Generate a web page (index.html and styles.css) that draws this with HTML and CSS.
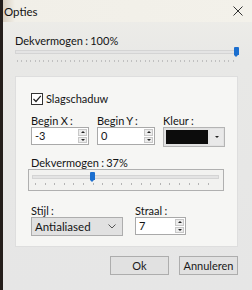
FILE: index.html
```html
<!DOCTYPE html>
<html lang="nl">
<head>
    <meta charset="UTF-8">
    <meta name="viewport" content="width=device-width, initial-scale=1.0">
    <title>Opties</title>
    <link rel="stylesheet" href="styles.css">
</head>
<body>

    <div class="window">
        <!-- Titelbalk -->
        <div class="titlebar">
            <span class="title">Opties</span>
            <svg class="close" width="10" height="10" viewBox="0 0 10 10">
                <path d="M0.5 0.5 L9.5 9.5 M9.5 0.5 L0.5 9.5" stroke="#333" stroke-width="1" fill="none"/>
            </svg>
        </div>

        <div class="content">
            <!-- Dekvermogen venster -->
            <div class="label">Dekvermogen : 100%</div>
            <div class="slider slider-top">
                <div class="track"></div>
                <div class="thumb" style="left: 219px"></div>
                <div class="ticks"></div>
            </div>

            <!-- Slagschaduw -->
            <div class="panel">
                <label class="check">
                    <span class="box">
                        <svg width="10" height="10" viewBox="0 0 10 10">
                            <path d="M1.5 5 L4 7.5 L8.8 1.8" stroke="#222" stroke-width="1.2" fill="none"/>
                        </svg>
                    </span>
                    Slagschaduw
                </label>

                <div class="row">
                    <div class="field">
                        <div class="label">Begin X :</div>
                        <div class="spin w58">
                            <span class="value">-3</span>
                            <span class="arrows"><i class="up"></i><i class="down"></i></span>
                        </div>
                    </div>
                    <div class="field">
                        <div class="label">Begin Y :</div>
                        <div class="spin w58">
                            <span class="value">0</span>
                            <span class="arrows"><i class="up"></i><i class="down"></i></span>
                        </div>
                    </div>
                    <div class="field">
                        <div class="label">Kleur :</div>
                        <div class="color-combo">
                            <span class="swatch"></span>
                            <span class="drop"><i class="down"></i></span>
                        </div>
                    </div>
                </div>

                <div class="label shadow-label">Dekvermogen : 37%</div>
                <div class="slider-box">
                    <div class="slider slider-inner">
                        <div class="track"></div>
                        <div class="thumb" style="left: 58px"></div>
                        <div class="ticks"></div>
                    </div>
                </div>

                <div class="row row-bottom">
                    <div class="field">
                        <div class="label">Stijl :</div>
                        <div class="select">
                            <span>Antialiased</span>
                            <svg width="8" height="5" viewBox="0 0 8 5">
                                <path d="M0.5 0.5 L4 4 L7.5 0.5" stroke="#555" stroke-width="1" fill="none"/>
                            </svg>
                        </div>
                    </div>
                    <div class="field">
                        <div class="label">Straal :</div>
                        <div class="spin w51">
                            <span class="value">7</span>
                            <span class="arrows"><i class="up"></i><i class="down"></i></span>
                        </div>
                    </div>
                </div>
            </div>

            <!-- Knoppen -->
            <div class="buttons">
                <button class="btn">Ok</button>
                <button class="btn">Annuleren</button>
            </div>
        </div>
    </div>

</body>
</html>
```

FILE: styles.css
```css
body {
    margin: 0;
    padding: 0;
    background-color: #241e1b;
    font-family: Lato, "Noto Sans", sans-serif;
    font-size: 11px;
    word-spacing: -0.5px;
    color: #141414;
    overflow: hidden;
}
.window {
    margin-left: 3px;
    height: 290px;
    background-color: #e7e7e6;
    background-image: linear-gradient(180deg, #efeee9 0, #e8e8e6 60px, #e6e6e6 100%);
}
.titlebar {
    height: 22px;
    display: flex;
    align-items: center;
    justify-content: space-between;
    padding: 0 9px 0 1px;
    background: linear-gradient(90deg, #d9cfc0 0, #f1efe8 12px, #f3f1ea 100%);
}
.title {
    font-size: 11.5px;
    color: #111;
}
.content {
    padding: 12px 14px 0 12px;
}
.label {
    height: 14px;
    line-height: 14px;
}
.slider {
    position: relative;
}
.slider-top {
    height: 22px;
}
.slider .track {
    position: absolute;
    left: 0;
    right: 0;
    top: 2px;
    height: 2px;
    background: #e4e4e4;
    border: 1px solid #d4d4d4;
}
.slider .thumb {
    position: absolute;
    top: -1px;
    width: 5px;
    height: 8px;
    background: #1c6fcf;
    border-radius: 1px 1px 0 0;
}
.slider .thumb::after {
    content: "";
    position: absolute;
    left: 0;
    top: 8px;
    border-left: 2.5px solid transparent;
    border-right: 2.5px solid transparent;
    border-top: 2px solid #1c6fcf;
}
.slider .ticks {
    position: absolute;
    left: 2px;
    right: 2px;
    top: 12px;
    height: 2px;
    background: repeating-linear-gradient(90deg, #c0c0c0 0, #c0c0c0 1px, transparent 1px, transparent 4.4px);
}
.panel {
    margin-top: 6px;
    width: 206px;
    height: 153px;
    padding: 16px 0 0 15px;
    background: #f6f6f4;
    border: 1px solid #dedede;
}
.check {
    display: flex;
    align-items: center;
    gap: 3px;
    height: 12px;
    line-height: 12px;
    font-size: 11px;
}
.check .box {
    width: 10px;
    height: 10px;
    border: 1px solid #333;
    background: #fff;
    display: flex;
}
.row {
    display: flex;
    gap: 8px;
    margin-top: 9px;
}
.field .label {
    height: 13px;
    line-height: 13px;
}
.spin {
    height: 16px;
    display: flex;
    border: 1px solid #a9a9a9;
    background: #fff;
}
.w58 {
    width: 56px;
}
.w51 {
    width: 49px;
}
.spin .value {
    flex: 1;
    padding-left: 3px;
    line-height: 16px;
}
.spin .arrows {
    width: 9px;
    display: flex;
    flex-direction: column;
    gap: 1px;
    padding: 1px 1px 1px 0;
}
.spin .arrows i,
.color-combo .drop i {
    flex: 1;
    display: flex;
    align-items: center;
    justify-content: center;
    background: #ececec;
    border: 1px solid #c8c8c8;
}
.up::before,
.down::before {
    content: "";
    border-left: 2px solid transparent;
    border-right: 2px solid transparent;
}
.up::before {
    border-bottom: 2px solid #222;
}
.down::before {
    border-top: 2px solid #222;
}
.color-combo {
    width: 58px;
    height: 16px;
    display: flex;
    gap: 2px;
    padding: 1px;
    border: 1px solid #b4b4b4;
    background: #e2e2e2;
}
.color-combo .swatch {
    width: 42px;
    margin: 1px 0 1px 1px;
    background: #0c0c0c;
}
.color-combo .drop {
    flex: 1;
    display: flex;
}
.color-combo .drop i {
    border: none;
    background: #e9e9e9;
}
.shadow-label {
    margin-top: 10px;
    height: 12px;
    line-height: 12px;
}
.slider-box {
    margin-left: -3px;
    width: 194px;
    height: 17px;
    padding: 3px 0 0 0;
    border: 1px solid #b0b0b0;
    background: #f2f2f0;
}
.slider-inner {
    margin: 0 4px 0 3px;
    height: 14px;
}
.slider-inner .ticks {
    top: 10px;
    left: 3px;
    background: repeating-linear-gradient(90deg, #b4b4b4 0, #b4b4b4 1px, transparent 1px, transparent 9.6px);
}
.row-bottom {
    margin-top: 13px;
    gap: 12px;
}
.select {
    width: 81px;
    height: 17px;
    display: flex;
    align-items: center;
    justify-content: space-between;
    padding: 0 6px 0 3px;
    border: 1px solid #adadad;
    background: #e1e1e1;
    font-size: 11.5px;
}
.buttons {
    display: flex;
    justify-content: flex-end;
    gap: 10px;
    margin-top: 9px;
}
.btn {
    width: 59px;
    height: 19px;
    padding: 0;
    font-family: inherit;
    font-size: 11px;
    color: #1a1a1a;
    background: #e1e1e1;
    border: 1px solid #adadad;
}
```
